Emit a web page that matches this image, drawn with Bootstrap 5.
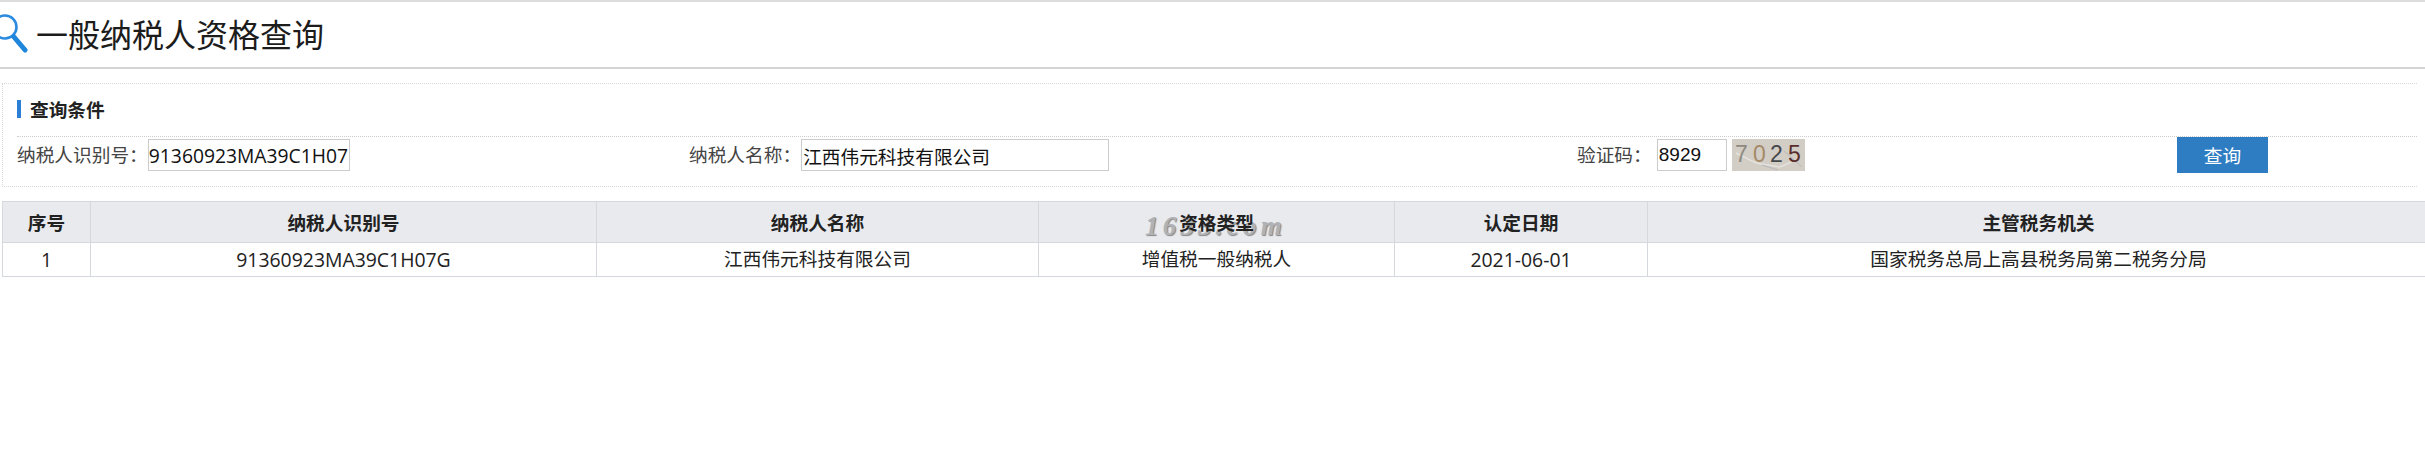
<!DOCTYPE html>
<html lang="zh-CN">
<head>
    <meta charset="UTF-8">
    <meta name="viewport" content="width=device-width, initial-scale=1.0">
    <title>一般纳税人资格查询</title>
    <link href="https://cdn.jsdelivr.net/npm/bootstrap@5.3.2/dist/css/bootstrap.min.css" rel="stylesheet">
    <style>
        html, body { overflow: hidden; }
        body { background: #fff; color: #222; font-family: "Open Sans", "Noto Sans CJK SC", sans-serif; font-size: 18.7px; border-top: 2px solid #ddd; }
        .page-head { height: 67px; border-bottom: 2px solid #d4d4d4; }
        .page-head svg { margin-right: 6px; margin-top: -3px; }
        .page-head h1 { font-size: 32px; font-weight: 400; margin: -2px 0 0; color: #1c1c1c; font-family: "Noto Sans CJK SC", sans-serif; }
        .query-box { margin: 14px 8px 0 2px; height: 104px; border: 1px dotted #d8d8d8; border-right: 0; padding: 0 0 0 14px; }
        .box-title { height: 53px; border-bottom: 1px dotted #ccc; padding-bottom: 2px; }
        .box-title h2 { font-size: 18.7px; font-weight: 700; margin: 0; padding-left: 9px; border-left: 4px solid #2b80d6; line-height: 18px; color: #222; font-family: "Noto Sans CJK SC", sans-serif; }
        .query-row { display: grid; grid-template-columns: 672px 888px 600px 91px; height: 49px; align-items: start; padding-top: 2px; }
        .field-label { color: #444; white-space: nowrap; }
        .label-short { margin-right: 5px; }
        .text-input { height: 32px; border: 1px solid #ccc; padding: 0 1px; font-size: 18.7px; color: #111; font-family: inherit; border-radius: 0; outline: 0; }
        .input-code { width: 202px; padding: 0; font-size: 19.3px; }
        .input-name { width: 308px; }
        .input-check { width: 70px; font-family: "Liberation Sans", sans-serif; font-size: 19px; }
        .captcha { margin-left: 5px; }
        .btn-query { width: 91px; height: 36px; background: #2e7dc3; color: #fff; border: 0; border-radius: 0; padding: 0; font-size: 18.7px; margin-top: -2px; font-family: "Noto Sans CJK SC", sans-serif; }
        .btn-query:hover { background: #2e7dc3; color: #fff; }
        .result-table { margin: 14px 0 0 2px; width: 2428px; table-layout: fixed; border-collapse: collapse; }
        .result-table th, .result-table td { text-align: center; vertical-align: middle; border: 1px solid #d5d8dc; padding: 0; color: #222; }
        .result-table th { background: #e8eaee; height: 41px; font-size: 18.7px; font-weight: 700; position: relative; font-family: "Noto Sans CJK SC", sans-serif; }
        .result-table td { height: 34px; font-size: 18.7px; background: #fff; }
        .result-table td.cell-latin { font-size: 19.4px; }
        .th-text { position: relative; }
        .watermark { position: absolute; left: 106px; top: 7px; font-family: "Liberation Serif", serif; font-style: italic; font-weight: 700; font-size: 27px; letter-spacing: 4.2px; line-height: 34px; color: #b0b2b6; text-shadow: 1px 1px 1px #858585; white-space: nowrap; }
    </style>
</head>
<body>
    <div class="page-head d-flex align-items-center">
        <svg width="30" height="40" viewBox="0 0 30 40">
            <circle cx="5" cy="14" r="11.5" fill="none" stroke="#2a8be0" stroke-width="2.6"/>
            <path d="M14 24 L25 37" stroke="#1f86dc" stroke-width="5" stroke-linecap="round"/>
        </svg>
        <h1>一般纳税人资格查询</h1>
    </div>

    <div class="query-box">
        <div class="box-title d-flex align-items-center">
            <h2>查询条件</h2>
        </div>
        <div class="query-row">
            <div class="d-flex align-items-center">
                <span class="field-label">纳税人识别号：</span>
                <input class="text-input input-code" type="text" value="91360923MA39C1H07">
            </div>
            <div class="d-flex align-items-center">
                <span class="field-label">纳税人名称：</span>
                <input class="text-input input-name" type="text" value="江西伟元科技有限公司">
            </div>
            <div class="d-flex align-items-center">
                <span class="field-label label-short">验证码：</span>
                <input class="text-input input-check" type="text" value="8929">
                <svg class="captcha" width="73" height="32" viewBox="0 0 73 32">
                    <rect width="73" height="32" fill="#d2cdc5"/>
                    <path d="M4 14 L24 24 L48 28 L66 20" stroke="#e4e2de" stroke-width="1.5" fill="none"/>
                    <path d="M30 26 L46 31 M52 12 L70 28" stroke="#b9b7bb" stroke-width="1" fill="none"/>
                    <text x="3" y="23" font-family="Liberation Sans, sans-serif" font-size="23" fill="#8e8a80">7</text>
                    <text x="21" y="23" font-family="Liberation Sans, sans-serif" font-size="23" fill="#a58a68">0</text>
                    <text x="38" y="23" font-family="Liberation Sans, sans-serif" font-size="23" fill="#45484c">2</text>
                    <text x="56" y="23" font-family="Liberation Sans, sans-serif" font-size="23" fill="#5a2e2c">5</text>
                </svg>
            </div>
            <button class="btn btn-query" type="button">查询</button>
        </div>
    </div>

    <table class="result-table">
        <colgroup>
            <col style="width: 88px">
            <col style="width: 506px">
            <col style="width: 442px">
            <col style="width: 356px">
            <col style="width: 253px">
            <col>
        </colgroup>
        <thead>
            <tr>
                <th>序号</th>
                <th>纳税人识别号</th>
                <th>纳税人名称</th>
                <th><span class="watermark">1633.com</span><span class="th-text">资格类型</span></th>
                <th>认定日期</th>
                <th>主管税务机关</th>
            </tr>
        </thead>
        <tbody>
            <tr>
                <td class="cell-latin">1</td>
                <td class="cell-latin">91360923MA39C1H07G</td>
                <td>江西伟元科技有限公司</td>
                <td>增值税一般纳税人</td>
                <td class="cell-latin">2021-06-01</td>
                <td>国家税务总局上高县税务局第二税务分局</td>
            </tr>
        </tbody>
    </table>
</body>
</html>
